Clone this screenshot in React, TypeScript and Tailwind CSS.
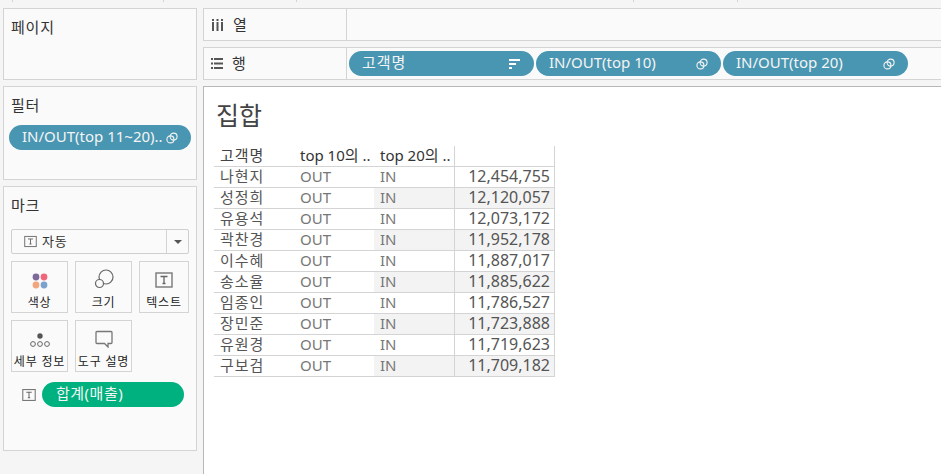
import React from 'react';

const rows = [
  ['나현지', '12,454,755'],
  ['성정희', '12,120,057'],
  ['유용석', '12,073,172'],
  ['곽찬경', '11,952,178'],
  ['이수혜', '11,887,017'],
  ['송소율', '11,885,622'],
  ['임종인', '11,786,527'],
  ['장민준', '11,723,888'],
  ['유원경', '11,719,623'],
  ['구보검', '11,709,182'],
];

const SetIcon = () => (
  <svg width="12" height="12" viewBox="0 0 12 12" fill="none" stroke="currentColor" strokeWidth="1.1" className="shrink-0">
    <circle cx="4.4" cy="7.4" r="3.5" />
    <circle cx="7.6" cy="4.6" r="3.5" />
  </svg>
);

const SortIcon = () => (
  <svg width="12" height="10" viewBox="0 0 12 10" fill="white" className="shrink-0">
    <rect x="0" y="0" width="11" height="2" />
    <rect x="0" y="4" width="7" height="2" />
    <rect x="0" y="8" width="3" height="2" />
  </svg>
);

const TextIcon = ({ size = 18 }: { size?: number }) => (
  <svg width={size} height={size} viewBox="0 0 18 18" fill="none" className="shrink-0">
    <rect x="1" y="2" width="16" height="14" stroke="#777" strokeWidth="1.4" fill="#fafafa" />
    <path d="M5.5 5.5h7M9 5.5v7M7.5 12.5h3" stroke="#666" strokeWidth="1.3" />
  </svg>
);

const Pill = ({ label, color = 'bg-[#4996b2]', width, icon }: { label: string; color?: string; width: string; icon?: React.ReactNode }) => (
  <div className={`flex h-[25px] items-center justify-between rounded-full text-[15px] text-[#f4f4f4] ${color} ${width}`}>
    <span className="whitespace-nowrap pb-[3px]">{label}</span>
    {icon}
  </div>
);

const MarkCard = ({ label, icon, width }: { label: string; icon: React.ReactNode; width: string }) => (
  <div className={`flex h-[52px] flex-col items-center border border-[#d4d4d4] ${width}`}>
    <div className="flex h-[27px] items-end justify-center">{icon}</div>
    <span className="mt-[6px] whitespace-nowrap text-[12px] leading-[16px] tracking-[0.8px] text-[#222]">{label}</span>
  </div>
);

export default function App() {
  return (
    <div
      className="relative flex h-[474px] w-[941px] overflow-hidden bg-[#f5f5f5] pl-[3px] pt-[8px] text-[#333]"
      style={{ fontFamily: '"Noto Sans", "Noto Sans CJK KR", sans-serif' }}
    >
      {/* little ticks along the top edge */}
      {[12, 163, 296, 633, 737].map((x) => (
        <div key={x} className="absolute top-0 h-[2px] w-px bg-[#d4d4d4]" style={{ left: x }} />
      ))}

      {/* left side cards */}
      <div className="flex w-[194px] shrink-0 flex-col gap-[6px]">
        <div className="h-[72px] border border-[#d4d4d4] bg-[#fafafa] pl-[7px] pt-[6px] text-[15px] leading-[24px] tracking-[0.8px]">페이지</div>

        <div className="h-[94px] border border-[#d4d4d4] bg-[#fafafa] pt-[6px]">
          <div className="pl-[7px] text-[15px] leading-[24px] tracking-[0.8px]">필터</div>
          <div className="mt-[8px] pl-[5px]">
            <Pill label="IN/OUT(top 11~20).." width="w-[182px] pl-[13px] pr-[13px]" icon={<SetIcon />} />
          </div>
        </div>

        <div className="h-[265px] border border-[#d4d4d4] bg-[#fafafa] pt-[6px]">
          <div className="pl-[7px] text-[15px] leading-[24px] tracking-[0.8px]">마크</div>

          <div className="ml-[7px] mt-[12px] flex h-[25px] w-[178px] items-center rounded-[2px] border border-[#cfcfcf] text-[13px] tracking-[0.8px]">
            <div className="flex flex-1 items-center gap-[5px] pl-[12px]">
              <TextIcon size={13} />
              <span>자동</span>
            </div>
            <div className="flex h-full w-[22px] items-center justify-center border-l border-[#d4d4d4]">
              <div className="h-0 w-0 border-x-[4px] border-t-[4px] border-x-transparent border-t-[#555]" />
            </div>
          </div>

          <div className="ml-[7px] mt-[7px] flex gap-[7px]">
            <MarkCard
              label="색상"
              width="w-[57px]"
              icon={
                <svg width="16" height="16" viewBox="0 0 18 18">
                  <circle cx="4.5" cy="4.5" r="3.8" fill="#7d6a9c" />
                  <circle cx="13.5" cy="4.5" r="3.8" fill="#f0677c" />
                  <circle cx="4.5" cy="13.5" r="3.8" fill="#f2a67e" />
                  <circle cx="13.5" cy="13.5" r="3.8" fill="#7ba2cc" />
                </svg>
              }
            />
            <MarkCard
              label="크기"
              width="w-[57px]"
              icon={
                <svg width="20" height="20" viewBox="0 0 20 20" fill="none" stroke="#666" strokeWidth="1.2">
                  <circle cx="12" cy="8" r="7" />
                  <circle cx="5.5" cy="14.5" r="4" fill="#fafafa" />
                </svg>
              }
            />
            <MarkCard label="텍스트" width="w-[50px]" icon={<TextIcon />} />
          </div>

          <div className="ml-[7px] mt-[7px] flex gap-[7px]">
            <MarkCard
              label="세부 정보"
              width="w-[57px]"
              icon={
                <svg width="20" height="16" viewBox="0 0 20 16" fill="none" stroke="#666" strokeWidth="1">
                  <circle cx="10" cy="4" r="2.7" fill="#555" stroke="none" />
                  <circle cx="3" cy="12" r="2.4" />
                  <circle cx="10" cy="12" r="2.4" />
                  <circle cx="17" cy="12" r="2.4" />
                </svg>
              }
            />
            <MarkCard
              label="도구 설명"
              width="w-[57px]"
              icon={
                <svg width="18" height="18" viewBox="0 0 18 18" fill="none" stroke="#777" strokeWidth="1.3">
                  <path d="M2 1.5h14a1 1 0 0 1 1 1v10a1 1 0 0 1-1 1h-3v3.5l-3.5-3.5H2a1 1 0 0 1-1-1v-10a1 1 0 0 1 1-1z" />
                </svg>
              }
            />
          </div>

          <div className="ml-[18px] mt-[10px] flex items-center gap-[6px]">
            <TextIcon size={14} />
            <Pill label="합계(매출)" color="bg-[#00b180]" width="w-[142px] pl-[14px] tracking-[0.5px]" />
          </div>
        </div>
      </div>

      {/* right side: shelves + view */}
      <div className="ml-[6px] flex min-w-0 flex-1 flex-col">
        <div className="flex h-[33px] border-y border-l border-[#d4d4d4] bg-[#fafafa]">
          <div className="flex w-[143px] items-center gap-[10px] border-r border-[#d4d4d4] pl-[8px] text-[15px]">
            <svg width="11" height="12" viewBox="0 0 11 12" fill="#555">
              <rect x="0" y="0" width="2" height="2" />
              <rect x="4.5" y="0" width="2" height="2" />
              <rect x="9" y="0" width="2" height="2" />
              <rect x="0" y="3" width="2" height="9" />
              <rect x="4.5" y="3" width="2" height="9" />
              <rect x="9" y="3" width="2" height="9" />
            </svg>
            <span>열</span>
          </div>
        </div>

        <div className="mt-[6px] flex h-[33px] border-y border-l border-[#d4d4d4] bg-[#fafafa]">
          <div className="flex w-[143px] items-center gap-[9px] border-r border-[#d4d4d4] pl-[7px] text-[15px]">
            <svg width="12" height="11" viewBox="0 0 12 11" fill="#555">
              <rect x="0" y="0" width="2" height="2" />
              <rect x="3" y="0" width="9" height="2" />
              <rect x="0" y="4.5" width="2" height="2" />
              <rect x="3" y="4.5" width="9" height="2" />
              <rect x="0" y="9" width="2" height="2" />
              <rect x="3" y="9" width="9" height="2" />
            </svg>
            <span>행</span>
          </div>
          <div className="flex items-center gap-[2px] pl-[2px]">
            <Pill label="고객명" width="w-[185px] pl-[13px] pr-[13px] tracking-[1px]" icon={<SortIcon />} />
            <Pill label="IN/OUT(top 10)" width="w-[185px] pl-[13px] pr-[13px]" icon={<SetIcon />} />
            <Pill label="IN/OUT(top 20)" width="w-[185px] pl-[13px] pr-[13px]" icon={<SetIcon />} />
          </div>
        </div>

        <div className="mt-[6px] flex-1 border-l border-t border-[#b8b8b8] bg-white pl-[10px]">
          <div className="pl-[2px] pt-[10px] text-[25px] leading-[36px] text-[#444]">집합</div>

          <div className="mt-[13px] w-[341px] text-[15px]">
            <div className="flex h-[21px] border-b border-[#d4d4d4] leading-[19px] text-[#333]">
              <div className="w-[80px] pl-[6px] tracking-[1px] text-[#444]">고객명</div>
              <div className="w-[80px] whitespace-nowrap pl-[6px]">top 10의 ..</div>
              <div className="w-[80px] whitespace-nowrap pl-[6px]">top 20의 ..</div>
              <div className="w-[101px] border-x border-[#d4d4d4]" />
            </div>
            {rows.map(([name, value], i) => (
              <div key={name} className="flex h-[21px] border-b border-[#d4d4d4] leading-[19px] text-[#777]">
                <div className="w-[80px] pl-[6px] tracking-[1px] text-[#555]">{name}</div>
                <div className="w-[80px] pl-[6px]">OUT</div>
                <div className={`w-[80px] pl-[6px] ${i % 2 === 1 ? 'bg-[#f3f3f3]' : ''}`}>IN</div>
                <div className={`w-[101px] border-x border-[#d4d4d4] pr-[4px] text-right text-[16px] text-[#555] ${i % 2 === 1 ? 'bg-[#f3f3f3]' : ''}`}>
                  {value}
                </div>
              </div>
            ))}
          </div>
        </div>
      </div>
    </div>
  );
}
